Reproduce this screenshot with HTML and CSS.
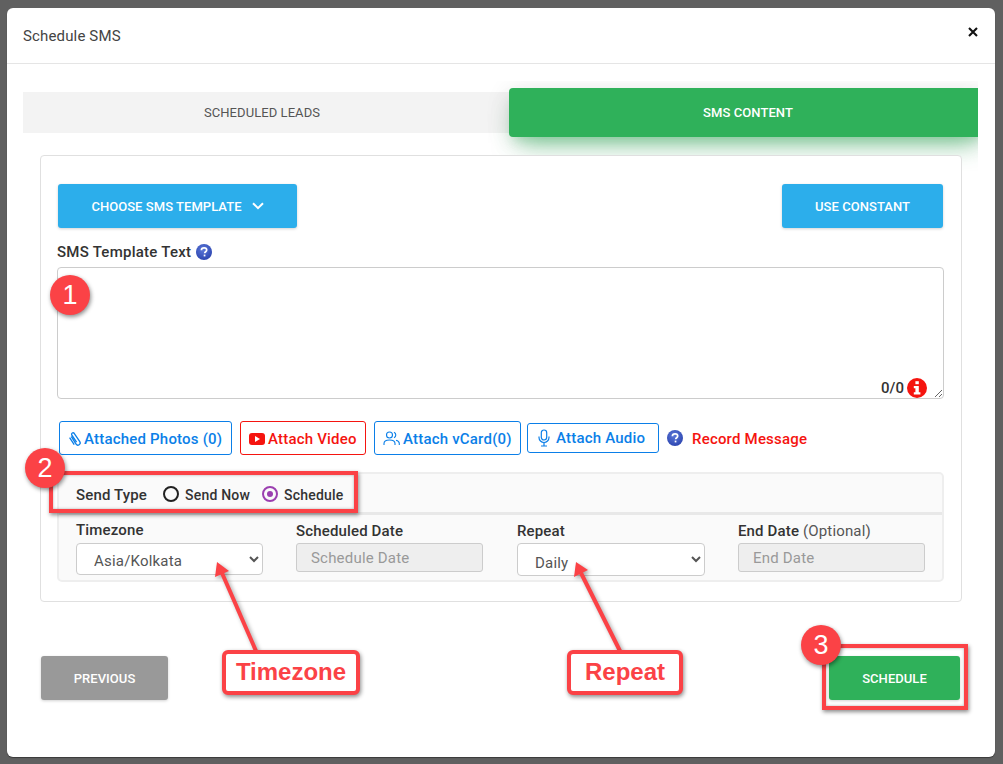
FILE: index.html
```html
<!DOCTYPE html>
<html lang="en">
<head>
<meta charset="utf-8">
<title>Schedule SMS</title>
<link rel="stylesheet" href="styles.css">
</head>
<body>
<div class="modal">
  <header class="modal-header">
    <h1 class="modal-title">Schedule SMS</h1>
    <svg class="close" width="10" height="10" viewBox="0 0 10 10"><path d="M1 1l8 8M9 1l-8 8" stroke="#111" stroke-width="2.1" fill="none"/></svg>
  </header>
  <div class="tabs">
    <div class="tab tab-idle">SCHEDULED LEADS</div>
    <div class="tab tab-active">SMS CONTENT</div>
  </div>
  <section class="card">
    <div class="top-buttons">
      <button class="btn btn-blue btn-template">CHOOSE SMS TEMPLATE
        <svg width="12" height="8" viewBox="0 0 12 8"><path d="M1 1.2l5 5 5-5" stroke="#fff" stroke-width="2" fill="none"/></svg>
      </button>
      <button class="btn btn-blue btn-constant">USE CONSTANT</button>
    </div>
    <div class="template-label">
      <span>SMS Template Text</span>
      <svg class="help" width="16" height="16" viewBox="0 0 16 16"><use href="#help-icon"/></svg>
    </div>
    <div class="text-wrap">
      <textarea class="sms-text"></textarea>
      <div class="counter"><span>0/0</span>
        <svg width="20" height="20" viewBox="0 0 20 20"><circle cx="10" cy="10" r="10" fill="#f5140f"/><rect x="8.4" y="3.2" width="3.4" height="3" fill="#fff"/><path d="M6.8 8h5v6.2h1.6v2.3H6.8v-2.3h1.6v-3.9H6.8z" fill="#fff"/></svg>
      </div>
    </div>
    <div class="attach-row">
      <a class="attach attach-photos">
        <svg width="14" height="16" viewBox="0 0 14 16"><path d="M3.2 5.5l4.9 7.6a2.2 2.2 0 0 0 3.7-2.4L6.2 2.3a1.5 1.5 0 0 0-2.5 1.6l4.9 7.3M1.6 6.6l4.6 7" stroke="#0b7fe8" stroke-width="1.3" fill="none"/></svg>
        Attached Photos (0)</a>
      <a class="attach attach-video">
        <svg width="16" height="12" viewBox="0 0 16 12"><rect width="16" height="12" rx="3" fill="#f5140f"/><path d="M6 3l5 3-5 3z" fill="#fff"/></svg>
        Attach Video</a>
      <a class="attach attach-vcard">
        <svg width="17" height="16" viewBox="0 0 17 16" fill="none" stroke="#0b7fe8" stroke-width="1.1"><circle cx="6.5" cy="4" r="3"/><path d="M1 14v-1.5C1 10 3 9 6.500 9S12 10 12 12.500V14M11 1.300a3 3 0 0 1 0 5.500M13 9.300c2 .5 3.300 1.500 3.300 3.200V14"/></svg>
        Attach vCard(0)</a>
      <a class="attach attach-audio">
        <svg width="12" height="18" viewBox="0 0 12 18" fill="none" stroke="#0b7fe8" stroke-width="1.2"><rect x="3.300" y="1" width="5.400" height="10" rx="2.700"/><path d="M1 7.500v1a5 5 0 0 0 10 0v-1M6 13.500V17M3 17h6"/></svg>
        Attach Audio</a>
      <svg class="help help-record" width="16" height="16" viewBox="0 0 16 16"><use href="#help-icon"/></svg>
      <a class="record">Record Message</a>
    </div>
    <div class="panel">
      <div class="panel-head">
        <span class="send-label">Send Type</span>
        <label class="radio"><span class="dot"></span>Send Now</label>
        <label class="radio radio-on"><span class="dot"></span>Schedule</label>
      </div>
      <div class="panel-fields">
        <div class="field">
          <label class="field-label">Timezone</label>
          <select class="control"><option>Asia/Kolkata</option></select>
        </div>
        <div class="field">
          <label class="field-label">Scheduled Date</label>
          <input class="date" disabled placeholder="Schedule Date">
        </div>
        <div class="field">
          <label class="field-label">Repeat</label>
          <select class="control control-tall"><option>Daily</option></select>
        </div>
        <div class="field">
          <label class="field-label">End Date <span class="optional">(Optional)</span></label>
          <input class="date" disabled placeholder="End Date">
        </div>
      </div>
    </div>
  </section>
  <footer class="modal-footer">
    <button class="btn btn-grey">PREVIOUS</button>
    <button class="btn btn-green">SCHEDULE</button>
  </footer>
</div>

<svg class="defs" width="0" height="0">
  <defs>
    <radialGradient id="help-fill" cx="45%" cy="35%" r="70%"><stop offset="0" stop-color="#5c78d8"/><stop offset="1" stop-color="#2a43ae"/></radialGradient>
    <symbol id="help-icon" viewBox="0 0 16 16">
      <circle cx="8" cy="8" r="8" fill="url(#help-fill)"/>
      <path d="M5.400 6.200c0-1.500 1.200-2.300 2.700-2.300s2.600.8 2.600 2.100c0 1.800-2 1.700-2 3.300" stroke="#fff" stroke-width="1.700" fill="none"/>
      <rect x="7.700" y="10.600" width="1.700" height="1.800" fill="#fff"/>
    </symbol>
  </defs>
</svg>

<svg class="arrows" width="1003" height="764" viewBox="0 0 1003 764">
  <path d="M256 651L222 573" stroke="#fb4246" stroke-width="4" fill="none"/>
  <path d="M217 562L229 571L215 577z" fill="#fb4246"/>
  <path d="M620 651L581 573" stroke="#fb4246" stroke-width="4" fill="none"/>
  <path d="M576 562L588 570L574 577z" fill="#fb4246"/>
</svg>
<div class="mark mark-send"></div>
<div class="mark mark-schedule"></div>
<div class="badge badge-1">1</div>
<div class="badge badge-2">2</div>
<div class="badge badge-3">3</div>
<div class="callout callout-timezone">Timezone</div>
<div class="callout callout-repeat">Repeat</div>
</body>
</html>
```
FILE: styles.css
```css
* { box-sizing: border-box; }
html, body { margin: 0; height: 764px; overflow: hidden; }
body {
  background: #606060;
  font-family: Roboto, "Liberation Sans", sans-serif;
  color: #333;
  padding: 8px 8px 7px 7px;
  position: relative;
}
.modal {
  background: #fff;
  border-radius: 6px;
  height: 749px;
  box-shadow: 0 1px 1px rgba(0,0,0,.4);
}
.modal-header {
  height: 56px;
  border-bottom: 1px solid #e5e5e5;
  padding: 0 17px 0 16px;
  display: flex;
  justify-content: space-between;
}
.modal-title { margin: 19px 0 0; font-size: 15px; font-weight: 400; line-height: 18px; color: #444; letter-spacing: .15px; }
.close { margin-top: 19px; }

.tabs {
  margin: 17px 17px -16px 16px;
  height: 90px;
  overflow: hidden;
  display: flex;
  align-items: flex-start;
}
.tab {
  font-size: 13px;
  letter-spacing: .07px;
  display: flex;
  align-items: center;
  justify-content: center;
}
.tab-idle {
  flex: none;
  width: 487px;
  height: 41px;
  margin-top: 11px;
  padding-right: 9px;
  background: #f3f3f3;
  color: #555;
}
.tab-active {
  flex: none;
  width: 478px;
  height: 49px;
  margin: 7px 0 0 -1px;
  background: #2fb15a;
  color: #fff;
  font-weight: 500;
  border-radius: 4px;
  box-shadow: 0 16px 26px -10px rgba(47,177,90,.56), 0 4px 25px 0 rgba(0,0,0,.12), 0 8px 10px -5px rgba(47,177,90,.2);
  position: relative;
}

.card {
  position: relative;
  margin: 0 33px;
  height: 447px;
  background: #fff;
  border: 1px solid #e0e0e0;
  border-radius: 4px;
  padding: 28px 17px 0 16px;
}
.top-buttons { display: flex; justify-content: space-between; padding: 0 1px; }
.btn {
  height: 44px;
  border: 0;
  border-radius: 3px;
  color: #fff;
  font: 500 13px Roboto, sans-serif;
  letter-spacing: .05px;
  box-shadow: 0 1px 3px rgba(0,0,0,.18);
  padding: 0;
}
.btn-blue { background: #2caeeb; }
.btn-template { width: 239px; display: flex; align-items: center; justify-content: center; gap: 10px; }
.btn-constant { width: 161px; }
.template-label {
  display: flex;
  align-items: center;
  gap: 5px;
  margin-top: 14px;
  height: 20px;
  font-size: 15px;
  font-weight: 500;
  letter-spacing: .25px;
}
.help { display: block; flex: none; }
.text-wrap { position: relative; margin-top: 5px; height: 132px; }
.sms-text {
  display: block;
  width: 887px;
  height: 132px;
  border: 1px solid #ccc;
  border-radius: 4px;
  resize: both;
  background: #fff;
  outline: 0;
  margin: 0;
}
.counter {
  position: absolute;
  right: 17px;
  bottom: 1px;
  display: flex;
  align-items: center;
  gap: 3px;
  font-size: 15px;
  font-weight: 500;
}

.attach-row { display: flex; align-items: center; margin-top: 22px; height: 34px; padding-left: 2px; }
.attach {
  display: flex;
  align-items: center;
  height: 34px;
  border: 1px solid #0b7fe8;
  border-radius: 3px;
  color: #0b7fe8;
  font-size: 15px;
  font-weight: 500;
  white-space: nowrap;
  letter-spacing: .2px;
  padding-top: 1px;
}
.attach-photos { width: 173px; padding-left: 8px; gap: 2px; }
.attach-video { width: 126px; margin-left: 8px; padding-left: 8px; gap: 3px; border-color: #f5140f; color: #f5140f; }
.attach-vcard { width: 147px; margin-left: 8px; padding-left: 8px; gap: 3px; }
.attach-audio { width: 132px; height: 30px; margin-left: 6px; padding: 0 0 0 10px; gap: 6px; }
.help-record { margin-left: 8px; }
.record { margin-left: 9px; padding-top: 1px; color: #f5140f; font-size: 15px; font-weight: 500; letter-spacing: .2px; }

.panel {
  width: 887px;
  height: 110px;
  margin-top: 17px;
  background: #fafafa;
  border: 2px solid #eee;
  border-radius: 5px;
}
.panel-head {
  height: 41px;
  border-bottom: 3px solid #e8e8e8;
  display: flex;
  align-items: center;
  padding: 3px 0 0 17px;
  font-size: 15px;
  font-weight: 500;
}
.send-label { margin-right: 16px; letter-spacing: .15px; }
.radio { display: flex; align-items: center; gap: 6px; margin-right: 12px; font-size: 14px; letter-spacing: .2px; white-space: nowrap; }
.dot { width: 16px; height: 16px; border: 2px solid #222; border-radius: 50%; margin-top: -2px; }
.radio-on .dot { border-color: #9b3fb0; position: relative; }
.radio-on .dot::after {
  content: "";
  position: absolute;
  left: 3px;
  top: 3px;
  width: 6px;
  height: 6px;
  border-radius: 50%;
  background: #9b3fb0;
}
.panel-fields {
  display: grid;
  grid-template-columns: 186px repeat(3, 187px);
  column-gap: 34px;
  padding: 5px 0 0 17px;
}
.field { display: flex; flex-direction: column; }
.field-label { height: 23px; line-height: 21px; font-size: 15px; font-weight: 500; letter-spacing: .15px; white-space: nowrap; }
.field:not(:first-child) .field-label { line-height: 23px; }
.optional { font-weight: 400; color: #555; }
.control {
  flex: none;
  width: 187px;
  height: 32px;
  border: 1px solid #ccc;
  border-radius: 4px;
  background: #fff;
  color: #555;
  font: 400 15px Roboto, sans-serif;
  letter-spacing: .2px;
  padding: 4px 0 0 13px;
  margin: 0;
}
.control-tall { width: 188px; height: 33px; padding-top: 6px; }
.date {
  width: 100%;
  height: 29px;
  border: 1px solid #ccc;
  border-radius: 3px;
  background: #eee;
  font: 400 15px Roboto, sans-serif;
  letter-spacing: .2px;
  padding: 0 14px;
  margin: 0;
}
.date::placeholder { color: #999; opacity: 1; }

.modal-footer { display: flex; justify-content: space-between; margin-top: 54px; padding: 0 35px 0 34px; }
.btn-grey { width: 127px; background: #999; }
.btn-green { width: 131px; background: #2fb15a; }

.defs { position: absolute; }
.arrows { position: absolute; left: 0; top: 0; filter: drop-shadow(2px 2px 2px rgba(0,0,0,.35)); }
.mark {
  position: absolute;
  border: 4px solid #fb4246;
  box-shadow: 1px 2px 4px rgba(0,0,0,.45), inset 0 0 3px rgba(0,0,0,.3);
}
.mark-send { left: 49px; top: 471px; width: 309px; height: 42px; }
.mark-schedule { left: 822px; top: 644px; width: 146px; height: 66px; }
.badge {
  position: absolute;
  width: 40px;
  height: 40px;
  border-radius: 50%;
  background: #fb4246;
  color: #fff;
  font: 400 27px/40px "Liberation Sans", sans-serif;
  text-align: center;
  box-shadow: 1px 2px 4px rgba(0,0,0,.45);
}
.badge-1 { left: 50px; top: 275px; }
.badge-2 { left: 25px; top: 448px; }
.badge-3 { left: 801px; top: 625px; }
.callout {
  position: absolute;
  top: 650px;
  height: 45px;
  background: #fff;
  border: 4px solid #fb4246;
  border-radius: 6px;
  color: #fb4246;
  font: 700 24px/35px "Liberation Sans", sans-serif;
  text-align: center;
  box-shadow: 1px 2px 4px rgba(0,0,0,.45);
}
.callout-timezone { left: 222px; width: 138px; }
.callout-repeat { left: 567px; width: 116px; }
```
